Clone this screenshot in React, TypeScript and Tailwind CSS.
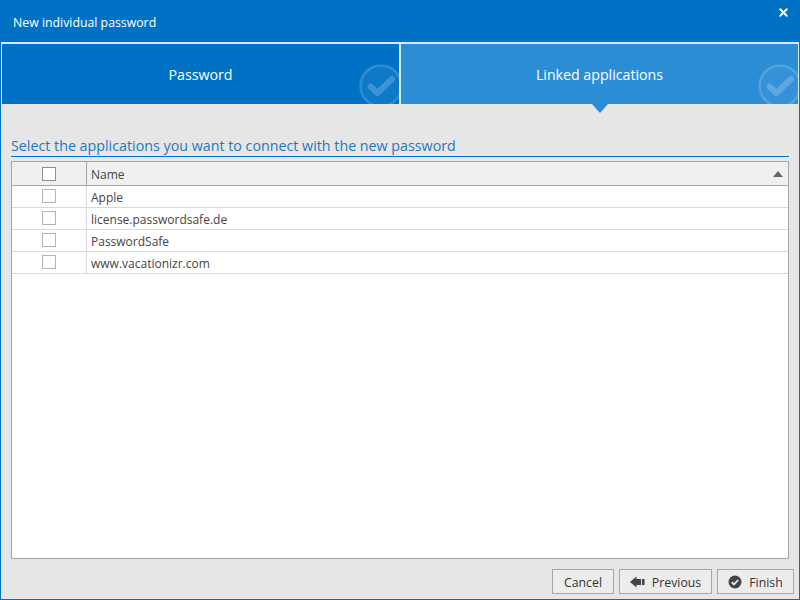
import { X } from 'lucide-react';

const APPS = ['Apple', 'license.passwordsafe.de', 'PasswordSafe', 'www.vacationizr.com'];

function TabCheck() {
  return (
    <svg width="44" height="44" viewBox="0 0 44 44" className="absolute left-0 top-0 overflow-visible">
      <circle cx="22" cy="22" r="20.5" fill="rgba(255,255,255,0.05)" stroke="rgba(255,255,255,0.17)" strokeWidth="2.5" />
      <path d="M11.5 22.5 L18.5 29 L33 15" fill="none" stroke="rgba(255,255,255,0.2)" strokeWidth="6" strokeLinecap="round" strokeLinejoin="round" />
    </svg>
  );
}

function Tab({ label, active }: { label: string; active?: boolean }) {
  return (
    <div className={`relative flex h-full flex-1 items-center justify-center overflow-hidden text-[14.2px] text-white ${active ? 'bg-[#2b8dd6]' : 'bg-[#0072c6]'}`}>
      <span className="mt-[1px]">{label}</span>
      <div className="absolute right-[-4px] top-[20px] h-[44px] w-[44px]">
        <TabCheck />
      </div>
    </div>
  );
}

function Checkbox({ dark }: { dark?: boolean }) {
  return <div className={`h-[14px] w-[14px] bg-white border ${dark ? 'border-[#8f8f8f]' : 'border-[#b4b4b4]'}`} />;
}

function FooterButton({ children, className }: { children: React.ReactNode; className: string }) {
  return (
    <button className={`flex h-[25px] items-center justify-center gap-[7px] border border-[#a8a8a8] bg-[#ececec] pt-[3px] text-[12.3px] text-[#333] ${className}`}>
      {children}
    </button>
  );
}

export default function App() {
  return (
    <div className="flex h-[600px] w-[800px] flex-col border-x border-b border-[#0072c6] bg-[#e6e6e6] font-['Open_Sans','Noto_Sans',sans-serif]">
      <div className="relative flex h-[42px] shrink-0 items-center bg-[#0072c6] pl-[12px] pt-[5px] text-[12.3px] text-white">
        <span>New individual password</span>
        <X className="absolute right-[9px] top-[6px] h-[13px] w-[13px]" strokeWidth={3.5} />
      </div>

      <div className="relative flex h-[62px] shrink-0 gap-[2px] border-x border-t-2 border-[#d4ebf9] bg-[#d4ebf9]">
        <Tab label="Password" />
        <Tab label="Linked applications" active />
        <div className="absolute left-[590px] top-[60px] h-0 w-0 border-x-[8px] border-t-[9px] border-x-transparent border-t-[#2b8dd6]" />
      </div>

      <div className="flex min-h-0 flex-1 flex-col px-[10px]">
        <div className="mt-[31px] flex h-[21px] shrink-0 flex-col text-[14.27px] leading-[20px] text-[#1f78c1]">
          <span className="flex-1 pt-[1px]">Select the applications you want to connect with the new password</span>
          <div className="h-[1px] shrink-0 bg-[#0078d0]" />
        </div>

        <div className="mt-[5px] flex min-h-0 flex-1 flex-col border border-[#a6a6a6] bg-white text-[12px] text-[#444]">
          <div className="flex h-[24px] shrink-0 border-b border-[#a6a6a6] bg-[#f0f0f0]">
            <div className="flex w-[75px] shrink-0 items-center justify-center border-r border-[#a6a6a6] pr-[1px]">
              <Checkbox dark />
            </div>
            <div className="flex flex-1 items-center justify-between pl-[4px] pr-[5px] pt-[2px]">
              <span>Name</span>
              <div className="-mt-[2px] h-0 w-0 border-x-[5px] border-b-[6px] border-x-transparent border-b-[#666]" />
            </div>
          </div>
          {APPS.map((app) => (
            <div key={app} className="flex h-[22px] shrink-0 border-b border-[#d9d9d9]">
              <div className="flex w-[75px] shrink-0 items-center justify-center border-r border-[#d9d9d9] pb-[2px] pr-[1px]">
                <Checkbox />
              </div>
              <div className="flex flex-1 items-center pl-[4px] pt-[2px]">{app}</div>
            </div>
          ))}
        </div>

        <div className="-mr-[5px] flex h-[40px] shrink-0 items-start justify-end gap-[5px] pt-[10px]">
          <FooterButton className="w-[62px]">Cancel</FooterButton>
          <FooterButton className="w-[93px]">
            <svg width="15" height="12" viewBox="0 0 15 12" className="-mt-[3px]">
              <path d="M0 6 L6.5 0.5 V3 H11 V9 H6.5 V11.5 Z" fill="#444" />
              <rect x="12" y="3" width="2.5" height="6" fill="#444" />
            </svg>
            Previous
          </FooterButton>
          <FooterButton className="w-[77px]">
            <svg width="14" height="14" viewBox="0 0 14 14" className="-mt-[3px]">
              <circle cx="7" cy="7" r="6.5" fill="#444" />
              <path d="M3.8 7.2 L6 9.4 L10.2 5" fill="none" stroke="#ececec" strokeWidth="1.8" />
            </svg>
            Finish
          </FooterButton>
        </div>
      </div>
    </div>
  );
}
